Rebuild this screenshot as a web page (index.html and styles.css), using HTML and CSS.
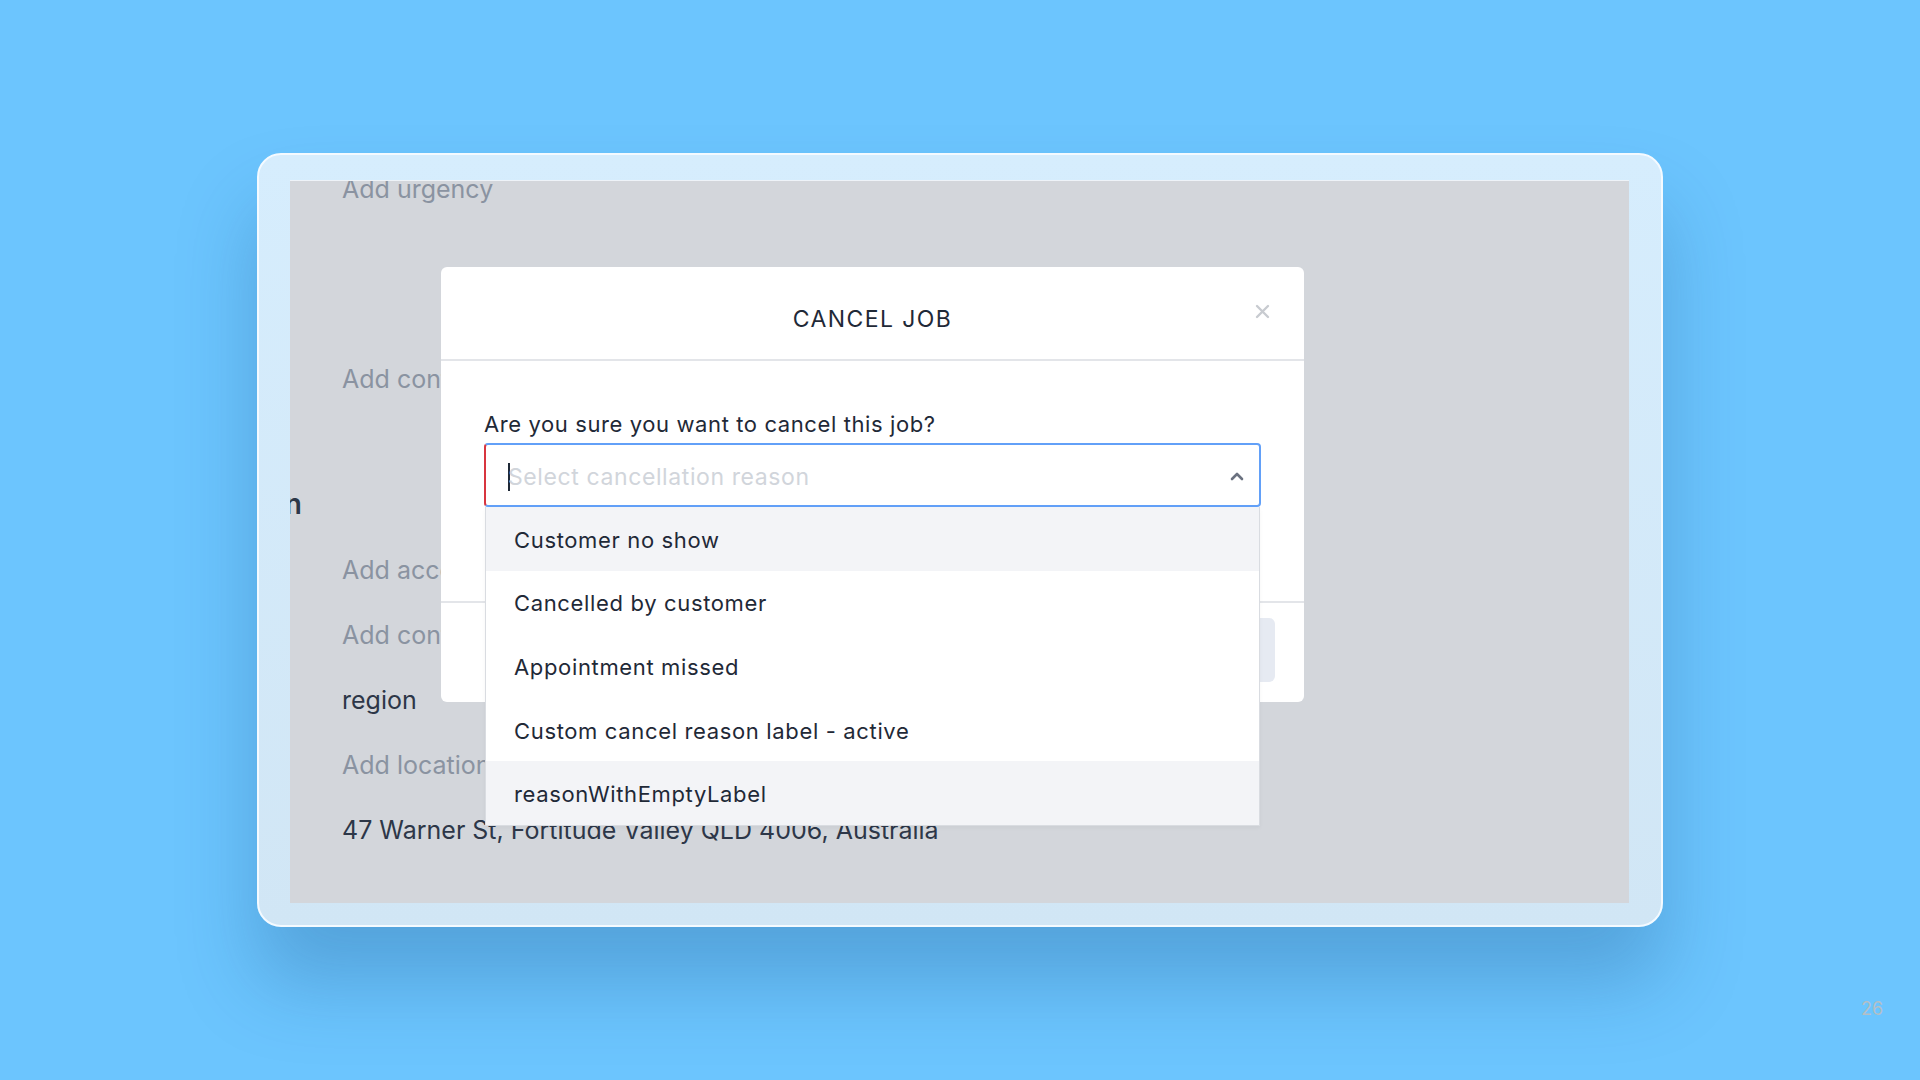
FILE: index.html
```html
<!DOCTYPE html>
<html lang="en">
<head>
    <meta charset="UTF-8">
    <meta name="viewport" content="width=device-width, initial-scale=1.0">
    <title>Cancel job</title>
    <link rel="stylesheet" href="styles.css">
</head>
<body>
<div class="slide">
    <div class="frame">
        <div class="screen">
            <div class="job-details">
                <div class="row muted">Add urgency</div>
                <div class="row muted gap-big">Add contact</div>
                <div class="row section-title">Location</div>
                <div class="row muted">Add access notes</div>
                <div class="row muted">Add contact name</div>
                <div class="row">region</div>
                <div class="row muted">Add location name</div>
                <div class="row">47 Warner St, Fortitude Valley QLD 4006, Australia</div>
            </div>

            <div class="modal">
                <div class="modal-header">
                    CANCEL JOB
                    <span class="close">
                        <svg width="15" height="15" viewBox="0 0 15 15">
                            <path d="M2 2 L13 13 M13 2 L2 13" stroke="#c8cbd0" stroke-width="2.4" stroke-linecap="round"/>
                        </svg>
                    </span>
                </div>
                <div class="modal-body">
                    <p class="question">Are you sure you want to cancel this job?</p>
                    <div class="select-wrap">
                        <div class="select">
                            <span class="caret"></span>
                            <span class="placeholder">Select cancellation reason</span>
                            <svg class="chevron" width="14" height="9" viewBox="0 0 14 9">
                                <path d="M2 7 L7 2 L12 7" fill="none" stroke="#6b7280" stroke-width="2.6" stroke-linecap="round" stroke-linejoin="round"/>
                            </svg>
                        </div>
                        <ul class="options">
                            <li class="hl">Customer no show</li>
                            <li>Cancelled by customer</li>
                            <li>Appointment missed</li>
                            <li>Custom cancel reason label - active</li>
                            <li class="hl">reasonWithEmptyLabel</li>
                        </ul>
                    </div>
                </div>
                <div class="modal-footer">
                    <button class="confirm">Cancel job</button>
                </div>
            </div>
        </div>
    </div>
    <div class="page-num">26</div>
</div>
</body>
</html>
```

FILE: styles.css
```css
*{
    margin: 0;
    padding: 0;
    box-sizing: border-box;
}
body{
    background: #6cc5fe;
    font-family: Inter, "Noto Sans", sans-serif;
}
.slide{
    position: relative;
    width: 1920px;
    height: 1080px;
    overflow: hidden;
    padding-top: 153px;
}
.frame{
    margin-left: 257px;
    width: 1406px;
    height: 774px;
    border: 2px solid #f4faff;
    border-radius: 24px;
    background: linear-gradient(#d6edfd, #d1e6f5);
    padding: 25px 32px 22px 31px;
    box-shadow: 0 55px 80px rgba(20, 75, 130, 0.28);
}
.screen{
    position: relative;
    height: 100%;
    background: #d3d6db;
    border-top: 1px solid #eef3f8;
    overflow: hidden;
}

/* job details behind the overlay */
.job-details{
    padding-left: 52px;
    margin-top: -24px;
    font-size: 25px;
    line-height: 65.2px;
    color: #2d3748;
}
.row{
    white-space: nowrap;
}
.muted{
    color: #8a93a1;
}
.gap-big{
    margin-top: 125px;
}
.section-title{
    margin-top: 60px;
    width: 200px;
    margin-left: -240px;
    text-align: right;
    font-size: 28px;
    font-weight: 600;
}

/* modal */
.modal{
    position: absolute;
    left: 151px;
    top: 86px;
    width: 863px;
    height: 435px;
    background: #fff;
    border-radius: 6px;
}
.modal-header{
    position: relative;
    height: 94px;
    padding-top: 38px;
    border-bottom: 2px solid #e3e5e9;
    text-align: center;
    font-size: 23px;
    letter-spacing: 1.4px;
    color: #1f2937;
}
.close{
    position: absolute;
    right: 34px;
    top: 37px;
    width: 15px;
    height: 15px;
    display: flex;
}
.modal-body{
    height: 240px;
    padding: 50px 43px 0 43px;
}
.question{
    font-size: 22px;
    line-height: 27px;
    letter-spacing: 0.6px;
    color: #1f2937;
    margin-bottom: 5px;
}
.select-wrap{
    position: relative;
}
.select{
    display: flex;
    align-items: center;
    height: 64px;
    padding: 3px 15px 0 22px;
    border: 2px solid #62a0f8;
    border-left-color: #d8353f;
    border-radius: 4px;
}
.caret{
    width: 2px;
    height: 28px;
    background: #1f2937;
    margin-right: -2px;
}
.placeholder{
    flex: 1;
    font-size: 23px;
    letter-spacing: 0.6px;
    color: #d1d5db;
}
.options{
    position: absolute;
    top: 100%;
    left: 1px;
    right: 1px;
    list-style: none;
    background: #fff;
    border: 1px solid #d9dce1;
    border-top: none;
    box-shadow: 0 2px 4px rgba(0, 0, 0, 0.04);
    z-index: 2;
}
.options li{
    height: 63.6px;
    display: flex;
    align-items: center;
    padding: 2px 0 0 28px;
    font-size: 22px;
    letter-spacing: 0.65px;
    color: #1f2937;
}
.options li.hl{
    background: #f3f4f7;
}
.modal-footer{
    height: 101px;
    border-top: 2px solid #e3e5e9;
    display: flex;
    justify-content: flex-end;
    padding: 15px 29px 0 0;
}
.confirm{
    width: 300px;
    height: 64px;
    border: none;
    border-radius: 6px;
    background: #e6eaf2;
    color: #e6eaf2;
    font-family: inherit;
    font-size: 20px;
}

.page-num{
    position: absolute;
    left: 1861px;
    top: 998px;
    font-size: 18px;
    color: #b4bfc6;
}
```
